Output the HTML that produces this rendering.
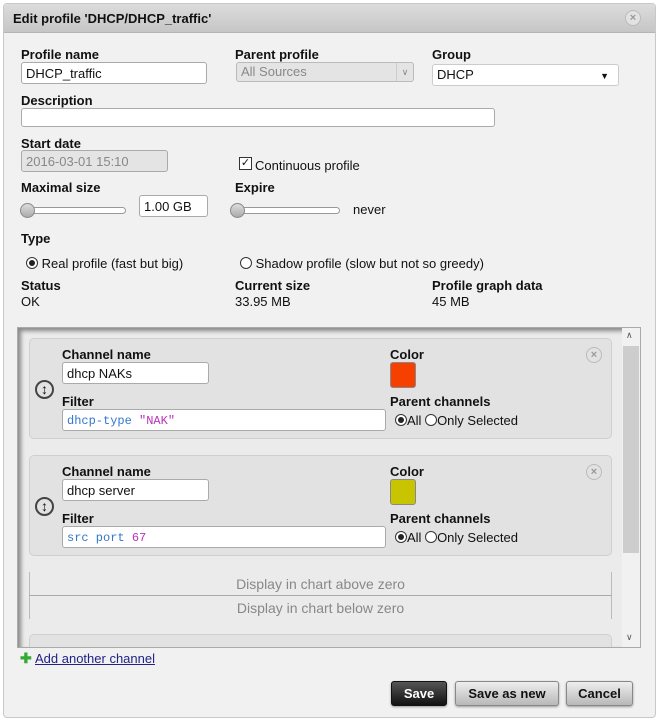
<!DOCTYPE html>
<html><head><meta charset="utf-8"><style>
*{box-sizing:border-box;margin:0;padding:0}
body{width:659px;height:721px;background:#fff;font-family:"Liberation Sans",sans-serif;font-size:13px;color:#111;position:relative;overflow:hidden}
.a{position:absolute;white-space:nowrap}
.b{font-weight:bold}
.in{position:absolute;background:#fff;border:1px solid #aaa;border-radius:3px;padding:4px 4px 2px;font-size:13px;line-height:14px}
.dlg{position:absolute;left:3px;top:3px;width:653px;height:715px;background:#f1f1f1;border:1px solid #c8c8c8;border-radius:4px}
.tb{position:absolute;left:4px;top:4px;width:651px;height:29px;background:linear-gradient(#dcdcdc,#c6c6c6);border-bottom:1px solid #b5b5b5;border-radius:4px 4px 0 0}
.cx{position:absolute;width:16px;height:16px;border-radius:50%;border:1px solid #bbb;background:#e2e2e2;color:#999;font-size:11px;font-weight:bold;text-align:center;line-height:14px}
.track{position:absolute;height:7px;border:1px solid #999;border-radius:4px;background:#fff}
.thumb{position:absolute;width:15px;height:15px;border-radius:50%;border:1px solid #888;background:linear-gradient(#ddd,#aaa)}
.rad{display:inline-block;width:12px;height:12px;border-radius:50%;border:1px solid #333;background:#fff;vertical-align:-1px;position:relative}
.rad.on::after{content:"";position:absolute;left:2px;top:2px;width:6px;height:6px;border-radius:50%;background:#222}
.card{position:absolute;left:29px;width:583px;height:101px;background:#e2e2e2;border:1px solid #cfcfcf;border-radius:5px}
.mono{font-family:"Liberation Mono",monospace;font-size:12px}
.btn{position:absolute;top:681px;height:25px;border-radius:3px;font-weight:bold;text-align:center;line-height:24px;font-size:13px;border:1px solid #888;background:linear-gradient(#eee,#b8b8b8);box-shadow:0 1px 2px #999}
.mv{position:absolute;left:35px;width:19px;height:19px;border:2px solid #444;border-radius:50%;text-align:center;font-size:14px;line-height:15px;font-weight:bold}
</style></head><body>
<div class="dlg"></div>
<div class="tb"></div>
<div class="a b" style="left:13px;top:11px">Edit profile 'DHCP/DHCP_traffic'</div>
<div class="cx" style="left:625px;top:10px">×</div>

<div class="a b" style="left:21px;top:47px">Profile name</div>
<div class="in" style="left:21px;top:62px;width:186px;height:22px">DHCP_traffic</div>
<div class="a b" style="left:235px;top:47px">Parent profile</div>
<div class="in" style="left:236px;top:62px;width:178px;height:20px;background:#e4e4e4;color:#888;border-color:#bbb;padding-top:2px">All Sources<span style="position:absolute;right:0;top:0;width:17px;height:18px;border-left:1px solid #ccc;font-size:9px;text-align:center;line-height:18px">∨</span></div>
<div class="a b" style="left:432px;top:47px">Group</div>
<div class="in" style="left:432px;top:64px;width:187px;height:22px;border-color:#ccc;padding-top:3px">DHCP<span style="position:absolute;right:9px;top:4px;font-size:9px">▼</span></div>

<div class="a b" style="left:21px;top:93px">Description</div>
<div class="in" style="left:21px;top:108px;width:474px;height:19px"></div>

<div class="a b" style="left:21px;top:136px">Start date</div>
<div class="in" style="left:21px;top:150px;width:147px;height:22px;background:#e4e4e4;color:#888">2016-03-01 15:10</div>
<div class="a" style="left:239px;top:157px;width:13px;height:13px;border:1px solid #333;background:#fff;font-size:11px;line-height:11px;text-align:center">✓</div>
<div class="a" style="left:255px;top:158px">Continuous profile</div>

<div class="a b" style="left:21px;top:180px">Maximal size</div>
<div class="track" style="left:24px;top:207px;width:102px"></div>
<div class="thumb" style="left:20px;top:203px"></div>
<div class="in" style="left:139px;top:195px;width:69px;height:22px">1.00 GB</div>
<div class="a b" style="left:235px;top:180px">Expire</div>
<div class="track" style="left:234px;top:207px;width:106px"></div>
<div class="thumb" style="left:230px;top:203px"></div>
<div class="a" style="left:353px;top:202px">never</div>

<div class="a b" style="left:21px;top:231px">Type</div>
<div class="a" style="left:26px;top:256px"><span class="rad on"></span> Real profile (fast but big)</div>
<div class="a" style="left:240px;top:256px"><span class="rad"></span> Shadow profile (slow but not so greedy)</div>
<div class="a b" style="left:21px;top:278px">Status</div>
<div class="a" style="left:21px;top:294px">OK</div>
<div class="a b" style="left:235px;top:278px">Current size</div>
<div class="a" style="left:235px;top:294px">33.95 MB</div>
<div class="a b" style="left:432px;top:278px">Profile graph data</div>
<div class="a" style="left:432px;top:294px">45 MB</div>

<div class="a" style="left:17px;top:327px;width:624px;height:321px;background:#ebebeb;border:1px solid #aaa;box-shadow:inset 3px 3px 4px #888;overflow:hidden">
 <div class="a" style="left:604px;top:0;width:18px;height:319px;background:#f1f1f1"></div>
 <div class="a" style="left:605px;top:18px;width:16px;height:207px;background:#cdcdcd"></div>
 <div class="a" style="left:608px;top:2px;font-size:9px;color:#555">∧</div>
 <div class="a" style="left:608px;top:304px;font-size:9px;color:#555">∨</div>
</div>

<div class="card" style="top:338px"></div>
<div class="mv" style="top:380px">↕</div>
<div class="a b" style="left:62px;top:347px;font-weight:bold">Channel name</div>
<div class="in" style="left:62px;top:362px;width:147px;height:22px">dhcp NAKs</div>
<div class="a b" style="left:62px;top:394px">Filter</div>
<div class="in mono" style="left:62px;top:409px;width:324px;height:22px;color:#37c"><span>dhcp-type</span> <span style="color:#b3b">"NAK"</span></div>
<div class="a b" style="left:390px;top:347px">Color</div>
<div class="a" style="left:390px;top:362px;width:26px;height:26px;background:#f54000;border:1px solid #888;border-radius:3px"></div>
<div class="a b" style="left:390px;top:394px">Parent channels</div>
<div class="a" style="left:395px;top:413px"><span class="rad on"></span>All <span class="rad"></span>Only Selected</div>
<div class="cx" style="left:586px;top:347px">×</div>

<div class="card" style="top:455px"></div>
<div class="mv" style="top:497px">↕</div>
<div class="a b" style="left:62px;top:464px">Channel name</div>
<div class="in" style="left:62px;top:479px;width:147px;height:22px">dhcp server</div>
<div class="a b" style="left:62px;top:511px">Filter</div>
<div class="in mono" style="left:62px;top:526px;width:324px;height:22px;color:#37c">src port <span style="color:#b3b">67</span></div>
<div class="a b" style="left:390px;top:464px">Color</div>
<div class="a" style="left:390px;top:479px;width:26px;height:26px;background:#c8c400;border:1px solid #888;border-radius:3px"></div>
<div class="a b" style="left:390px;top:511px">Parent channels</div>
<div class="a" style="left:395px;top:530px"><span class="rad on"></span>All <span class="rad"></span>Only Selected</div>
<div class="cx" style="left:586px;top:464px">×</div>

<div class="a" style="left:29px;top:572px;width:583px;height:47px;border-left:1px solid #bbb;border-right:1px solid #bbb"></div>
<div class="a" style="left:29px;top:595px;width:583px;height:1px;background:#aaa"></div>
<div class="a" style="left:29px;top:576px;width:583px;text-align:center;color:#888;font-size:14px">Display in chart above zero</div>
<div class="a" style="left:29px;top:600px;width:583px;text-align:center;color:#888;font-size:14px">Display in chart below zero</div>
<div class="a" style="left:29px;top:634px;width:583px;height:13px;background:#e2e2e2;border:1px solid #cfcfcf;border-bottom:none;border-radius:5px 5px 0 0"></div>

<div class="a" style="left:20px;top:650px;color:#3a3;font-weight:bold;font-size:14px">✚</div>
<div class="a" style="left:35px;top:651px;color:#228;text-decoration:underline">Add another channel</div>

<div class="btn" style="left:391px;width:56px;background:linear-gradient(#555,#111);color:#fff;border-color:#111">Save</div>
<div class="btn" style="left:455px;width:104px">Save as new</div>
<div class="btn" style="left:566px;width:67px">Cancel</div>
</body></html>
